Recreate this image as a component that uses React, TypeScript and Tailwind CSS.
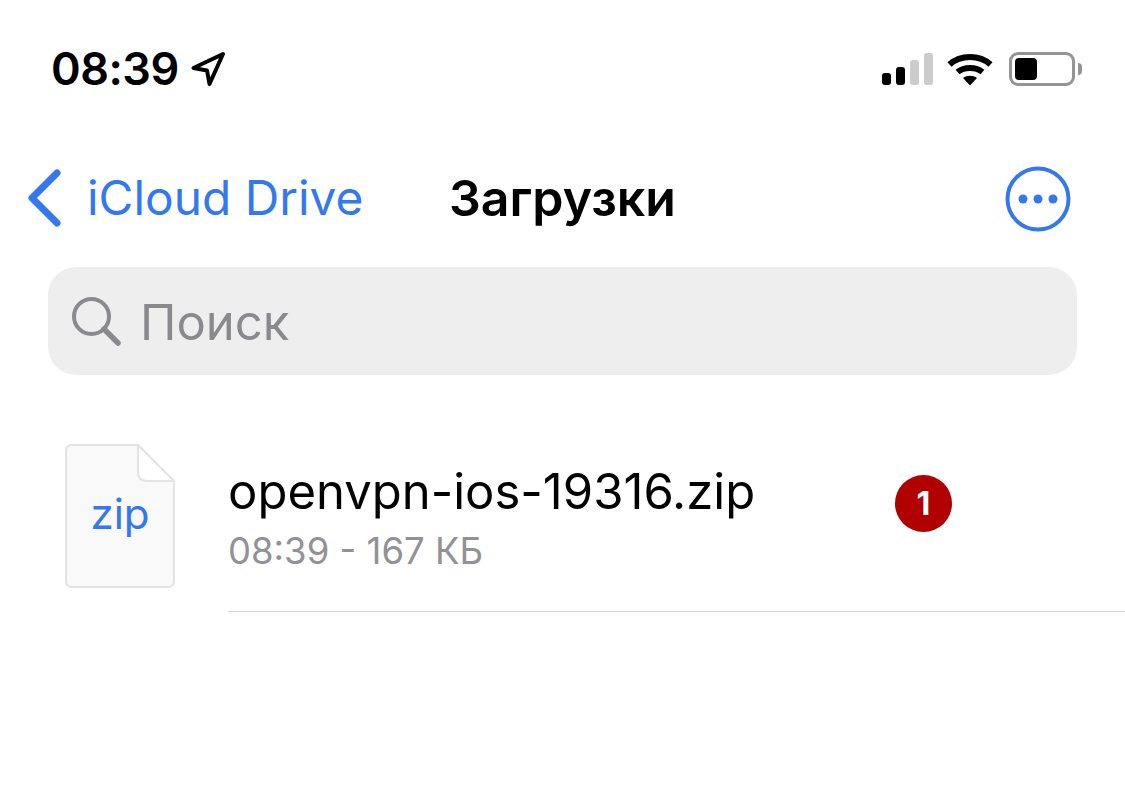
function LocationArrow() {
  return (
    <svg width="36" height="36" viewBox="0 0 36 36" fill="none">
      <path d="M33 3 L3.5 17 L17 19.5 L19.5 33 Z" stroke="#000" strokeWidth="4" strokeLinejoin="round" />
    </svg>
  );
}

function StatusIcons() {
  return (
    <div className="flex items-center">
      <div className="flex items-end gap-[5px] h-[32px]">
        <div className="w-[9px] h-[12px] rounded-[3px] bg-black" />
        <div className="w-[9px] h-[18px] rounded-[3px] bg-black" />
        <div className="w-[9px] h-[25px] rounded-[3px] bg-[#cccccc]" />
        <div className="w-[9px] h-[32px] rounded-[3px] bg-[#cccccc]" />
      </div>
      <svg className="ml-[14px]" width="46" height="33" viewBox="0 0 46 33" fill="none">
        <path d="M2.5 11.5 C13.5 1.5 32.5 1.5 43.5 11.5" stroke="#000" strokeWidth="6" />
        <path d="M10.5 19 C17 13.5 29 13.5 35.5 19" stroke="#000" strokeWidth="6" />
        <path d="M16 25 C20 22 26 22 30 25 L23 32.5 Z" fill="#000" />
      </svg>
      <div className="ml-[16px] w-[66px] h-[34px] rounded-[9px] border-[3px] border-[#949494] p-[3px] flex">
        <div className="w-[22px] h-full rounded-[4px] bg-black" />
      </div>
      <div className="ml-[3px] w-[4px] h-[12px] rounded-r-[4px] bg-[#949494]" />
    </div>
  );
}

function SearchIcon() {
  return (
    <svg width="50" height="50" viewBox="0 0 50 50" fill="none">
      <circle cx="20.5" cy="20.5" r="17.5" stroke="#8a8a8e" strokeWidth="4" />
      <path d="M33 33 L47 47" stroke="#8a8a8e" strokeWidth="5.5" strokeLinecap="round" />
    </svg>
  );
}

function ZipIcon() {
  return (
    <div className="relative w-[110px] h-[144px]">
      <svg className="absolute inset-0" width="110" height="144" viewBox="0 0 110 144" fill="none">
        <path
          d="M7 1 H73 L109 38 V137 Q109 143 103 143 H7 Q1 143 1 137 V7 Q1 1 7 1 Z"
          fill="#f9f9fa"
          stroke="#e3e3e5"
          strokeWidth="2"
        />
        <path d="M73 1 V28 Q73 37 82 37 H109 Z" fill="#ffffff" stroke="#e3e3e5" strokeWidth="2" strokeLinejoin="round" />
      </svg>
      <div className="absolute left-0 right-0 top-[40px] text-center text-[42px] leading-[60px] text-[#3478ee]">zip</div>
    </div>
  );
}

export default function App() {
  return (
    <div className="w-[1125px] h-[800px] bg-white overflow-hidden font-['Inter','Liberation_Sans',sans-serif]">
      <div className="flex items-center justify-between pl-[51px] pr-[43px] pt-[46px]">
        <div className="flex items-center gap-[11px]">
          <span className="text-[45px] leading-[46px] font-semibold tracking-[-0.5px] text-black">08:39</span>
          <LocationArrow />
        </div>
        <div className="pl-[2px]">
          <StatusIcons />
        </div>
      </div>

      <div className="relative flex items-center justify-between pl-[27px] pr-[54px] mt-[72px] h-[68px]">
        <div className="flex items-center gap-[26px]">
          <svg width="34" height="58" viewBox="0 0 34 58" fill="none">
            <path d="M30 4 L5 29 L30 54" stroke="#3478ee" strokeWidth="7" strokeLinecap="round" strokeLinejoin="round" />
          </svg>
          <span className="text-[47.8px] leading-[56px] text-[#3478ee]">iCloud Drive</span>
        </div>
        <span className="absolute left-[449px] text-[50px] leading-[56px] font-semibold text-black">Загрузки</span>
        <svg className="mt-[2px]" width="66" height="66" viewBox="0 0 66 66" fill="none">
          <circle cx="33" cy="33" r="30.5" stroke="#3478ee" strokeWidth="4" />
          <circle cx="18" cy="33" r="4.5" fill="#3478ee" />
          <circle cx="33" cy="33" r="4.5" fill="#3478ee" />
          <circle cx="48" cy="33" r="4.5" fill="#3478ee" />
        </svg>
      </div>

      <div className="mx-[48px] w-[1029px] mt-[35px] h-[108px] rounded-[28px] bg-[#eeeeef] flex items-center pl-[23px] gap-[19px]">
        <SearchIcon />
        <span className="mt-[3px] text-[49px] leading-[56px] text-[#8a8a8e]">Поиск</span>
      </div>

      <div className="flex pl-[65px] pt-[69px]">
        <ZipIcon />
        <div className="ml-[53px] flex-1">
          <div className="flex items-center h-[168px] border-b-[1px] border-[#d3d3d5]">
            <div className="w-[667px] pb-[20px]">
              <div className="text-[49px] leading-[54px] text-black">openvpn-ios-19316.zip</div>
              <div className="text-[36.5px] leading-[40px] text-[#929296] mt-[12px]">08:39 - 167 КБ</div>
            </div>
            <div className="mb-[48px] w-[57px] h-[57px] rounded-full bg-[#b00000] flex items-center justify-center text-white text-[32px] font-bold">
              1
            </div>
          </div>
        </div>
      </div>
    </div>
  );
}
